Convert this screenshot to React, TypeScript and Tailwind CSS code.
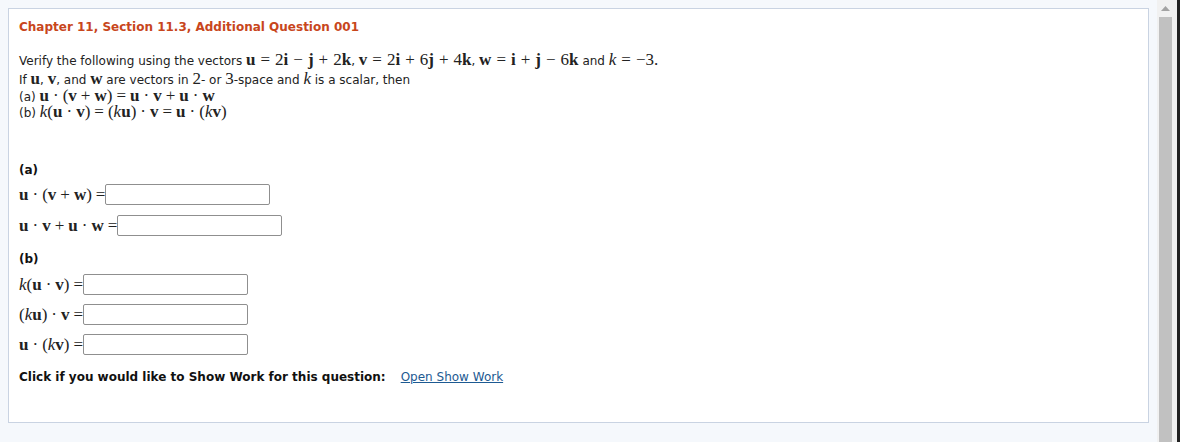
import React from 'react';

const B: React.FC<{ children: React.ReactNode }> = ({ children }) => (
  <span className="font-bold">{children}</span>
);

const I: React.FC<{ children: React.ReactNode }> = ({ children }) => (
  <span className="italic">{children}</span>
);

// binary operator / relation with MathJax-like spacing
const Op: React.FC<{ children: React.ReactNode }> = ({ children }) => (
  <span className="mx-[4px]">{children}</span>
);

// a bit wider spacing used in the first statement line
const OpW: React.FC<{ children: React.ReactNode }> = ({ children }) => (
  <span className="mx-[5px]">{children}</span>
);

const M: React.FC<{ children: React.ReactNode }> = ({ children }) => (
  <span className="font-['Liberation_Serif',serif] text-[17px] leading-none whitespace-nowrap">{children}</span>
);

const Dot = () => <Op>·</Op>;

const AnswerRow: React.FC<{ label: React.ReactNode }> = ({ label }) => (
  <div className="flex items-center h-[21px]">
    <M>
      {label}
      <span className="ml-[4px]">=</span>
    </M>
    <input
      type="text"
      className="w-[165px] h-[21px] border border-[#8f8f8f] rounded-[2px] bg-white outline-none"
    />
  </div>
);

export default function App() {
  return (
    <div className="w-[1180px] h-[442px] bg-[#f5f8fc] flex overflow-hidden font-['DejaVu_Sans',Verdana,sans-serif] text-[12px] text-[#222]">
      <div className="flex-1 pt-[8px] pl-[8px] pr-[8px]">
        <div className="h-[415px] bg-white border border-[#c9d3e2] pl-[10px] pt-[10px]">
          <h1 className="text-[12px] font-bold text-[#c8461c] leading-[16px]">
            Chapter 11, Section 11.3, Additional Question 001</h1>

          <div className="mt-[16px]">
            <div className="h-[19px] leading-[17px]">
              Verify the following using the vectors{' '}
              <M>
                <B>u</B><OpW>=</OpW>2<B>i</B><OpW>−</OpW><B>j</B><OpW>+</OpW>2<B>k</B>
              </M>
              ,{' '}
              <M>
                <B>v</B><OpW>=</OpW>2<B>i</B><OpW>+</OpW>6<B>j</B><OpW>+</OpW>4<B>k</B>
              </M>
              ,{' '}
              <M>
                <B>w</B><OpW>=</OpW><B>i</B><OpW>+</OpW><B>j</B><OpW>−</OpW>6<B>k</B>
              </M>{' '}
              and{' '}
              <M>
                <I>k</I><OpW>=</OpW>−3.
              </M>
            </div>
            <div className="h-[17px] leading-[17px]">
              If <M><B>u</B></M>, <M><B>v</B></M>, and <M><B>w</B></M> are vectors in <M>2</M>- or{' '}
              <M>3</M>-space and <M><I>k</I></M> is a scalar, then
            </div>
            <div className="h-[16px] leading-[16px]">
              (a){' '}
              <M>
                <B>u</B><Dot />(<B>v</B><Op>+</Op><B>w</B>)<Op>=</Op><B>u</B><Dot /><B>v</B><Op>+</Op><B>u</B><Dot /><B>w</B>
              </M>
            </div>
            <div className="h-[16px] leading-[16px]">
              (b){' '}
              <M>
                <I>k</I>(<B>u</B><Dot /><B>v</B>)<Op>=</Op>(<I>k</I><B>u</B>)<Dot /><B>v</B><Op>=</Op><B>u</B><Dot />(<I>k</I><B>v</B>)
              </M>
            </div>
          </div>

          <div className="mt-[42px] font-bold text-[#111]">(a)</div>
          <div className="mt-[5px] flex flex-col gap-[10px]">
            <AnswerRow label={<><B>u</B><Dot />(<B>v</B><Op>+</Op><B>w</B>)</>} />
            <AnswerRow label={<><B>u</B><Dot /><B>v</B><Op>+</Op><B>u</B><Dot /><B>w</B></>} />
          </div>

          <div className="mt-[14px] font-bold text-[#111]">(b)</div>
          <div className="mt-[6px] flex flex-col gap-[9px]">
            <AnswerRow label={<><I>k</I>(<B>u</B><Dot /><B>v</B>)</>} />
            <AnswerRow label={<>(<I>k</I><B>u</B>)<Dot /><B>v</B></>} />
            <AnswerRow label={<><B>u</B><Dot />(<I>k</I><B>v</B>)</>} />
          </div>

          <div className="mt-[13px] flex items-center">
            <span className="font-bold text-[#111]">Click if you would like to Show Work for this question:</span>
            <a href="#" className="ml-[15px] text-[#1d5a92] underline">Open Show Work</a>
          </div>
        </div>
      </div>

      {/* scrollbar */}
      <div className="w-[23px] h-full bg-[#f1f1f1] flex flex-col items-start pl-[2px] border-r-[3px] border-[#222]">
        <div className="h-[17px] w-[13px] flex items-center justify-center">
          <svg width="9" height="5" viewBox="0 0 9 5">
            <polygon points="0,5 4.5,0 9,5" fill="#a3a3a3" />
          </svg>
        </div>
        <div className="w-[13px] flex-1 bg-[#c1c1c1]" />
      </div>
    </div>
  );
}
